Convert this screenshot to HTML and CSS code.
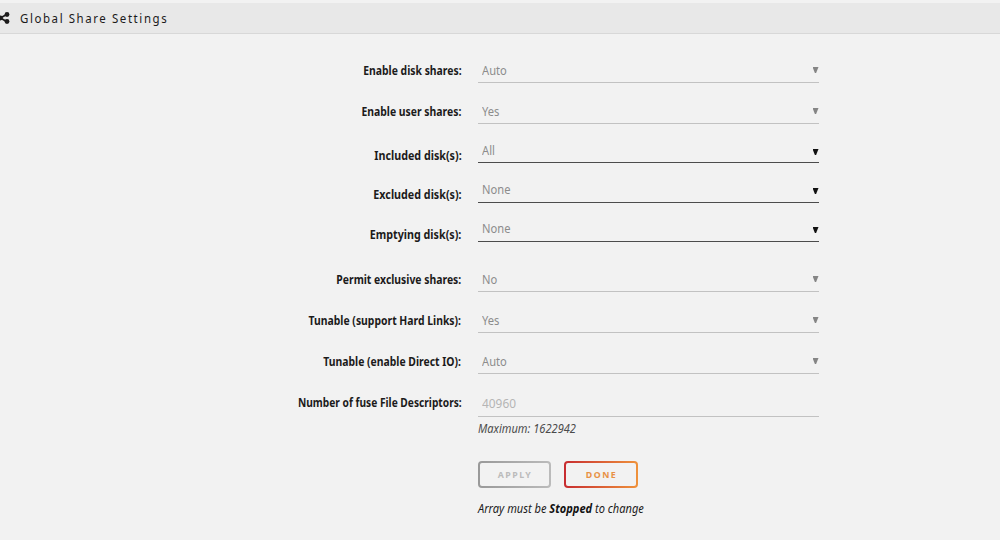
FILE: index.html
```html
<!DOCTYPE html>
<html lang="en">
<head>
<meta charset="utf-8">
<title>Global Share Settings</title>
<link rel="stylesheet" href="styles.css">
</head>
<body>
<header class="title">
<svg class="share" viewBox="0 0 12 12"><path d="M9 2.3 2.5 6 9 9.8" fill="none" stroke="#1c1b1b" stroke-width="1.7"/><g fill="#1c1b1b"><circle cx="9" cy="2.5" r="2.4"/><circle cx="2.4" cy="6" r="2.4"/><circle cx="9" cy="9.5" r="2.4"/></g></svg>
<h1><span>Global Share Settings</span></h1>
</header>
<main class="form">
<div class="row"><label><span>Enable disk shares:</span></label><div class="field"><span>Auto</span><i class="arrow"></i></div></div>
<div class="row"><label><span class="medium">Enable user shares:</span></label><div class="field"><span>Yes</span><i class="arrow"></i></div></div>
<div class="row multi"><label><span>Included disk(s):</span></label><div class="field"><span>All</span><i class="arrow"></i></div></div>
<div class="row multi half"><label><span>Excluded disk(s):</span></label><div class="field"><span>None</span><i class="arrow"></i></div></div>
<div class="row multi last-multi"><label><span>Emptying disk(s):</span></label><div class="field"><span>None</span><i class="arrow"></i></div></div>
<div class="row spaced"><label><span>Permit exclusive shares:</span></label><div class="field"><span>No</span><i class="arrow"></i></div></div>
<div class="row"><label><span class="medium">Tunable (support Hard Links):</span></label><div class="field"><span>Yes</span><i class="arrow"></i></div></div>
<div class="row"><label><span class="medium">Tunable (enable Direct IO):</span></label><div class="field"><span>Auto</span><i class="arrow"></i></div></div>
<div class="row number"><label><span>Number of fuse File Descriptors:</span></label><div class="field"><span>40960</span></div></div>
<div class="foot">
<p class="maximum"><span>Maximum: 1622942</span></p>
<div class="buttons"><button class="apply" disabled>APPLY</button><button class="done">DONE</button></div>
<p class="notice"><span>Array must be <strong>Stopped</strong> to change</span></p>
</div>
</main>
</body>
</html>
```
FILE: styles.css
```css
* { box-sizing: border-box; }
body { margin: 0; height: 540px; overflow: hidden; background: #f2f2f2; color: #1c1b1b; font: 12px/16px "Noto Sans", sans-serif; }
.title { height: 31px; margin-top: 3px; display: flex; align-items: center; background: #e8e8e8; border-bottom: 1px solid #d8d8d8; }
.share { width: 12px; height: 12px; margin-left: -2px; flex: none; }
h1 { margin: 1px 0 0 10px; font-size: 12px; font-weight: 400; letter-spacing: 1.65px; }
h1 span, label span, .field span, .foot p span { display: inline-block; white-space: nowrap; }
h1 span, .field span, .foot p span { transform-origin: left center; }
h1 span { transform: scaleX(.956); }
label span { transform: scaleX(.866); transform-origin: right center; }
label .medium { transform: scaleX(.866); }
.multi label span { transform: scaleX(.895); }
.number label span { transform: scaleX(.85); }
.form { padding-top: 8px; }
.row { height: 41px; display: flex; align-items: flex-end; }
label { width: 461.5px; flex: none; text-align: right; padding-bottom: 4px; font-weight: 700; }
.field { width: 340.5px; margin-left: 16.5px; height: 26px; padding: 6px 0 0 4px; border-bottom: 1px solid #c2c2c2; color: #8c8c8c; display: flex; justify-content: space-between; }
.field span { transform: scaleX(.93); }
.arrow { width: 6px; height: 6px; margin: 4px 0 0; background: #858585; clip-path: polygon(0 0, 100% 0, 60% 100%, 40% 100%); }
.multi { height: 39px; }
.multi label { padding-bottom: 0; }
.multi label span { position: relative; top: 1px; }
.multi .field { border-color: #4c4c4c; }
.multi .arrow { background: #111; margin-top: 6px; }
.half { height: 40px; }
.half .field, .last-multi .field { padding-top: 5px; }
.half label span { top: 0; }
.last-multi { height: 39px; }
.spaced { height: 50px; }
.number { height: 43px; }
.number label { padding-bottom: 6px; }
.number .field { height: 27px; color: #b5b5b5; }
.number .field span { transform: scaleX(.99); }
.foot { padding-left: 478px; }
.foot p { margin: 0; font-style: italic; }
.foot p span { transform: scaleX(.922); }
.foot .maximum { padding-top: 4px; color: #4b4b4b; }
.buttons { margin-top: 24px; display: flex; gap: 13px; }
button { width: 73px; height: 27px; padding: 0 0 0 1px; border: 2px solid transparent; border-radius: 4px; font: 700 8.8px "Noto Sans", sans-serif; letter-spacing: 1.5px; }
.apply { color: #bbb; background: linear-gradient(#f2f2f2, #f2f2f2) padding-box, linear-gradient(90deg, #999, #bbb) border-box; }
.done { width: 74px; color: #e89145; background: linear-gradient(#f2f2f2, #f2f2f2) padding-box, linear-gradient(90deg, #c72c30, #ef923b) border-box; }
.foot .notice { margin-top: 13px; }
.notice strong { color: #111; }
```
